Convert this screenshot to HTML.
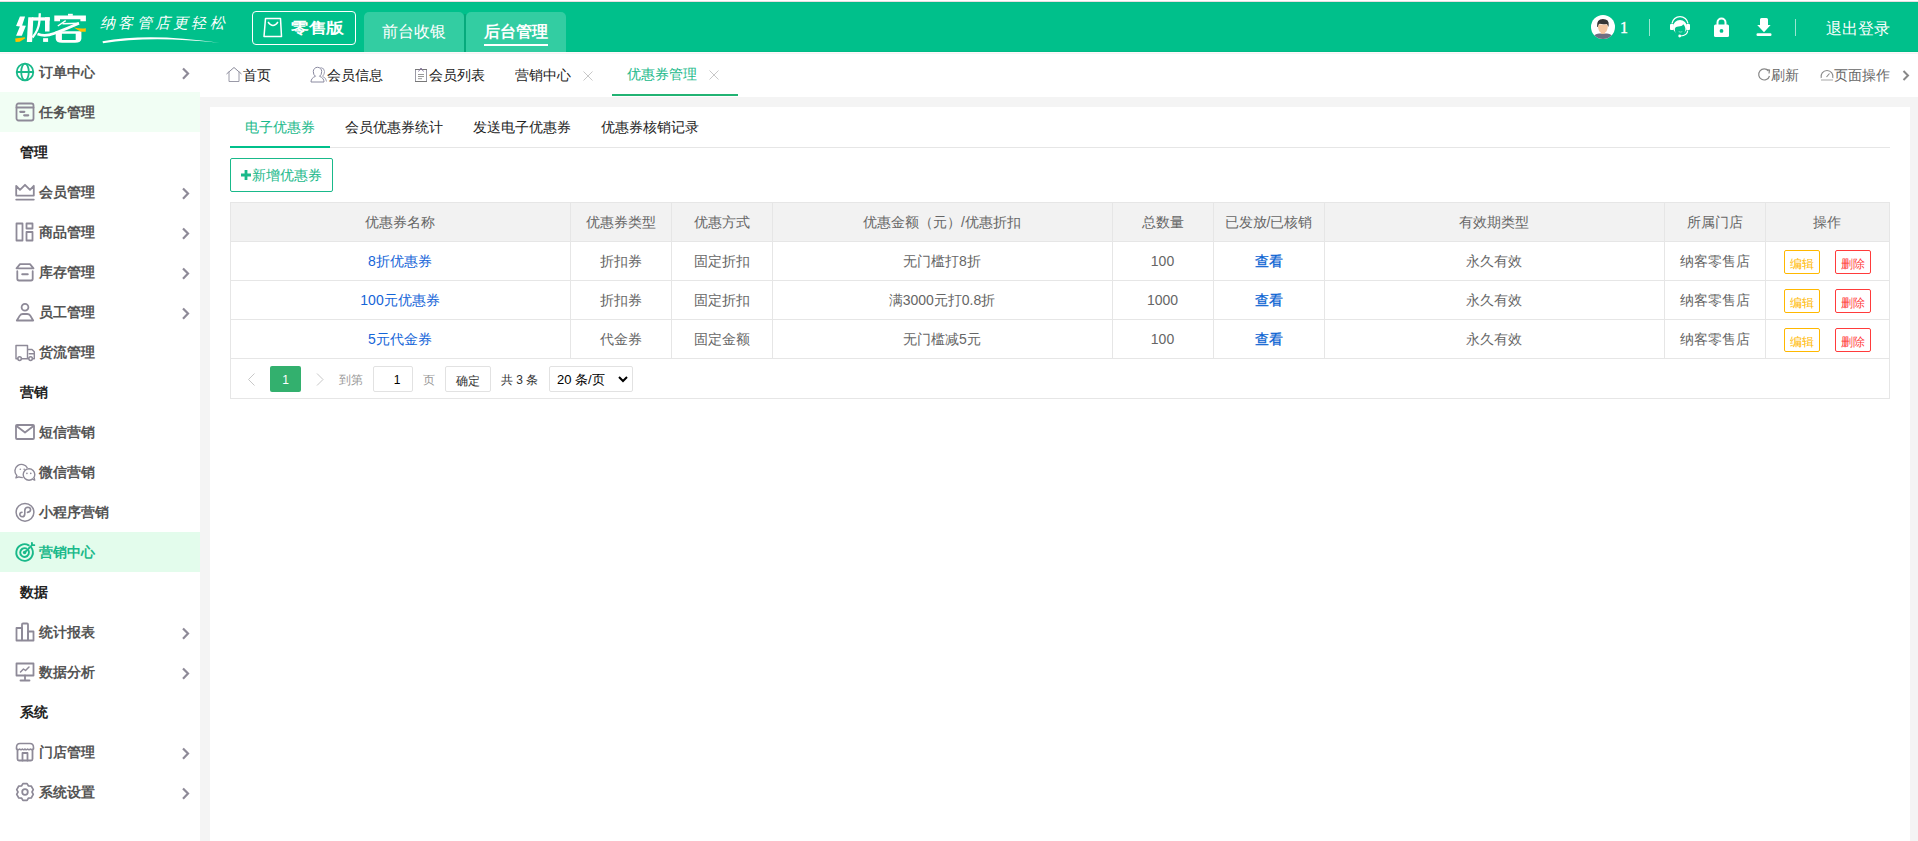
<!DOCTYPE html>
<html><head><meta charset="utf-8"><style>
*{box-sizing:border-box;margin:0;padding:0}
html,body{width:1918px;height:841px;overflow:hidden;background:#f4f4f4;font-family:"Liberation Sans",sans-serif;font-size:14px;color:#333}
#topline{position:absolute;left:0;top:1px;width:1918px;height:1px;background:#e6dde1}
body{background:#f4f4f4}
#hdr{position:absolute;left:0;top:2px;width:1918px;height:50px;background:#00c08b;border-top:1px solid #00bc87;border-bottom:1px solid #00bb86}
#side{position:absolute;left:0;top:52px;width:200px;height:789px;background:#fff}
#tabbar{position:absolute;left:200px;top:52px;width:1718px;height:45px;background:#fff}
#card{position:absolute;left:210px;top:107px;width:1700px;height:734px;background:#fff}
.t{position:absolute;white-space:nowrap}
svg{position:absolute;overflow:visible}
.si{position:absolute;left:0;width:200px;height:40px}
.si .lb{position:absolute;left:39px;top:0;line-height:40px;font-weight:bold;color:#555;font-size:14px;white-space:nowrap}
.sh{position:absolute;left:20px;height:40px;line-height:40px;font-weight:bold;color:#222;font-size:14px}
.cell{position:absolute;text-align:center;white-space:nowrap;font-size:14px}
.vl{position:absolute;width:1px;background:#e6e6e6}
.hl{position:absolute;height:1px;background:#e6e6e6}
</style></head><body>
<div style="position:absolute;left:0;top:0;width:1918px;height:1px;background:#fff"></div><div id="topline"></div><div id="hdr"></div><div id="side"></div><div id="tabbar"></div><div id="card"></div>
<svg style="left:0;top:0" width="100" height="52"><path d="M19.9 16.4 L25.1 16.4 L22.1 25.4 L25.9 25.8 L21.85 35.7 L16.07 35.7 L19.9 26.5 L16.07 26.1 Z" fill="#fff"/><path d="M15.2 38.5 L24.8 37.2 L25.3 38.3 L19.7 41.7 L15.6 41.9 Z" fill="#ffc000"/><path d="M28.3 17.3 L33.4 17.3 L32.1 41.9 L26.8 41.9 Z" fill="#fff"/><path d="M32 17.3 H49.7 V20.6 H32 Z" fill="#fff"/><path d="M45 17.3 H49.7 L49.5 31.4 H45 Z" fill="#fff"/><path d="M39.8 13.2 L39.3 22 Q38.6 30 32.5 37.5" stroke="#fff" stroke-width="2.3" fill="none"/><rect x="43.1" y="38.2" width="5" height="3.7" fill="#fff"/><rect x="68" y="13.8" width="4.8" height="2" fill="#fff"/><path d="M54.3 15.4 H85.9 V21.3 H80.4 V19.2 H60 V21.3 H54.3 Z" fill="#fff"/><path d="M57.8 26 L65.7 20.6" stroke="#fff" stroke-width="1.4" fill="none"/><path d="M62.5 23.8 L79 23.3" stroke="#fff" stroke-width="1.4" fill="none"/><path d="M79 23.2 Q66 29 54 33.5 Q45 37 37.5 34" stroke="#fff" stroke-width="2.8" fill="none"/><path fill-rule="evenodd" d="M55.7 31.3 H81.4 V38.5 Q81.4 42.7 75 42.7 H62 Q55.7 42.7 55.7 38.5 Z M61.9 33.7 V39.9 H75.7 V33.7 Z" fill="#fff"/><path d="M73.8 27.5 Q80 28.8 85.9 28.2 L85.7 31.8 L80.9 31.8 Q77 29.5 73.8 27.5 Z" fill="#ffc000"/></svg>
<div class="t" style="left:100px;top:11px;font-size:15px;line-height:24px;color:#fff;letter-spacing:3.3px;font-family:'Liberation Serif',serif;font-style:italic;font-weight:300">纳客管店更轻松</div>
<svg style="left:0;top:0" width="240" height="52"><path d="M102.5 41.2 Q150 32.5 219.5 42.8 Q150 35.5 103 43.3 Z" fill="#fff"/></svg>
<div style="position:absolute;left:252px;top:11px;width:104px;height:34px;border:1.3px solid #fff;border-radius:4px"></div>
<svg style="left:263px;top:17px" width="20" height="21"><path d="M2.5 1.5 H17.5 L18.5 19.5 H1 Z" stroke="#fff" stroke-width="1.5" fill="none" stroke-linejoin="round"/><path d="M5 5 Q10 12 15 5" stroke="#fff" stroke-width="1.3" fill="none"/></svg>
<div class="t" style="left:291px;top:16px;font-size:18px;line-height:24px;font-weight:bold;color:#fff;transform:scale(.98,.82);transform-origin:0 50%">零售版</div>
<div style="position:absolute;left:364px;top:12px;width:100px;height:40px;background:#33cda2;border-radius:5px 5px 0 0"></div>
<div style="position:absolute;left:466px;top:12px;width:100px;height:40px;background:#33cda2;border-radius:5px 5px 0 0"></div>
<div style="position:absolute;left:464px;top:14px;width:2px;height:38px;background:#06aa7c"></div>
<div class="t" style="left:382px;top:20px;font-size:16px;line-height:24px;color:#fff">前台收银</div>
<div class="t" style="left:484px;top:20px;font-size:16px;line-height:24px;color:#fff;font-weight:bold">后台管理</div>
<div style="position:absolute;left:484px;top:44px;width:64px;height:2px;background:#fff"></div>
<svg style="left:1591px;top:15px" width="24" height="24"><defs><clipPath id="cc"><circle cx="12" cy="12" r="12"/></clipPath></defs><circle cx="12" cy="12" r="12" fill="#fff"/><g clip-path="url(#cc)"><path d="M1.5 25 Q2 19.2 8 18.6 H16 Q22 19.2 22.5 25 Z" fill="#6e6e82"/><rect x="10" y="15.5" width="3.8" height="3.4" fill="#eebb94"/><path d="M6.9 9.5 Q6.8 15.5 9.3 17.3 Q11.9 19.3 14.5 17.3 Q17 15.5 16.9 9.5 Z" fill="#f5c6a0"/><path d="M6 11.8 Q5.4 4.1 11.9 4 Q18.3 4.1 17.7 10.2 L17.2 12 Q16.9 9.3 15.6 9 Q12 9.6 8.6 8.8 Q7.1 9.3 6.8 12 Z" fill="#363636"/></g></svg>
<div class="t" style="left:1620px;top:18px;font-size:16px;line-height:20px;color:#fff;font-family:'Liberation Serif',serif;-webkit-text-stroke:.3px #fff">1</div>
<div style="position:absolute;left:1649px;top:19px;width:1px;height:17px;background:rgba(255,255,255,.6)"></div>
<div style="position:absolute;left:1795px;top:19px;width:1px;height:17px;background:rgba(255,255,255,.6)"></div>
<svg style="left:1666px;top:12px" width="28" height="28"><path d="M6 11.5 A8.1 8.1 0 0 1 22 11.5" stroke="#fff" stroke-width="1.3" fill="none"/><circle cx="14" cy="15" r="7" fill="#fff"/><path d="M8.8 16.7 Q9.5 15 11 14.8 Q14.5 14.3 16 13.7 L17.3 12.2 Q18.3 13.3 18.6 14 Q19.3 15.5 19.4 16.7 Q19.6 19 18.2 21 Q16.5 23.5 14 23.5 Q11.5 23.5 10 21.5 Q8.6 19.5 8.8 16.7 Z" fill="#00c08b"/><rect x="4" y="12" width="3.8" height="6" rx="1" fill="#fff"/><rect x="20.2" y="12" width="3.8" height="6" rx="1" fill="#fff"/><path d="M21.7 18.5 Q21.5 23.5 14.3 24" stroke="#fff" stroke-width="1.2" fill="none"/><circle cx="13.7" cy="24" r="1.4" fill="#fff"/><path d="M12.7 19.7 Q14.5 20.5 16.3 19.7" stroke="#fff" stroke-width=".8" fill="none" opacity=".6"/></svg>
<svg style="left:1714px;top:17px" width="16" height="21"><path d="M3.5 8 V5.5 A4 4 0 0 1 11.5 5.5 V8" stroke="#fff" stroke-width="2" fill="none"/><rect x="0" y="7.5" width="15" height="12.5" rx="1.5" fill="#fff"/><circle cx="7.5" cy="13.9" r="1.9" fill="#00c08b"/></svg>
<svg style="left:1756px;top:17px" width="16" height="20"><path d="M4 8 V2.5 Q4 1 5.5 1 H10.5 Q12 1 12 2.5 V8 H14.6 L8 15.2 L1.2 8 Z" fill="#fff"/><rect x="0.5" y="16.2" width="15" height="2.8" rx="1.2" fill="#fff"/></svg>
<div class="t" style="left:1826px;top:17px;font-size:16px;line-height:24px;color:#fff">退出登录</div>
<div style="position:absolute;left:0;top:52px;width:1918px;height:1px;background:#fdf8fa"></div><div style="position:absolute;left:0;top:53px;width:1918px;height:1px;background:#f5f5f5"></div>
<svg style="left:226px;top:67px" width="17" height="16"><path d="M0.5 7 L8 0.5 L15.5 7" stroke="#8a8a9a" stroke-width="1" fill="none"/><path d="M3 4.5 V14.5 H13 V4.5" stroke="#9a9aa8" stroke-width="1" fill="none"/></svg>
<div class="t" style="left:243px;top:65px;font-size:14px;line-height:20px;color:#1a1a1a">首页</div>
<svg style="left:310px;top:66px" width="18" height="17"><path d="M1 16 Q1 12 5.5 10.3 Q3.3 9 3.3 5.5 A4.2 4.2 0 0 1 11.7 5.5 Q11.7 9 9.5 10.3 Q14 12 14 16 Z" stroke="#8a8aa0" stroke-width="1" fill="none"/><path d="M10.5 1.5 Q14.5 2 14.5 5.5 Q14.5 8.5 12.5 10.3 Q16.5 12 16.5 15.5" stroke="#a0a0b4" stroke-width="1" fill="none"/></svg>
<div class="t" style="left:327px;top:65px;font-size:14px;line-height:20px;color:#1a1a1a">会员信息</div>
<svg style="left:414px;top:67px" width="14" height="16"><path d="M1.5 2.5 H12.5 V14.5 H1.5 Z" stroke="#9a9aa6" stroke-width="1" fill="none"/><path d="M1 2.5 H13 M1 14.5 H13" stroke="#777" stroke-width="1"/><path d="M4.5 4.5 L7 1 L9.5 4.5" stroke="#8a7aa0" stroke-width="1" fill="none"/><path d="M4 7.5 H10 M4 9.5 H10 M4 11.7 H8" stroke="#999" stroke-width="1"/></svg>
<div class="t" style="left:429px;top:65px;font-size:14px;line-height:20px;color:#1a1a1a">会员列表</div>
<div class="t" style="left:515px;top:65px;font-size:14px;line-height:20px;color:#1a1a1a">营销中心</div>
<svg style="left:583px;top:71px" width="10" height="10"><path d="M0.5 0.5 L9.5 9.5 M9.5 0.5 L0.5 9.5" stroke="#c8c8c8" stroke-width="1"/></svg>
<div class="t" style="left:627px;top:64px;font-size:14px;line-height:20px;color:#19b98a">优惠券管理</div>
<svg style="left:709px;top:70px" width="10" height="10"><path d="M0.5 0.5 L9.5 9.5 M9.5 0.5 L0.5 9.5" stroke="#c8c8c8" stroke-width="1"/></svg>
<div style="position:absolute;left:612px;top:94px;width:126px;height:2px;background:#22b373"></div>
<svg style="left:1757px;top:68px" width="14" height="14"><path d="M11.5 3 A5.5 5.5 0 1 0 12.5 8" stroke="#888" stroke-width="1.2" fill="none"/><path d="M9 1.5 L12.5 2 L12 5.5" stroke="#888" stroke-width="1.2" fill="none"/></svg>
<div class="t" style="left:1771px;top:65px;font-size:14px;line-height:20px;color:#666">刷新</div>
<svg style="left:1820px;top:68px" width="14" height="14"><path d="M1.2 10 A6 6 0 1 1 12.8 10" stroke="#888" stroke-width="1.1" fill="none"/><path d="M1 12 H13" stroke="#c8c8c8" stroke-width="1.6"/><path d="M6.5 9 L9.5 5.5" stroke="#888" stroke-width="1.1"/></svg>
<div class="t" style="left:1834px;top:65px;font-size:14px;line-height:20px;color:#666">页面操作</div>
<svg style="left:1902px;top:70px" width="8" height="11"><path d="M1.5 1 L6 5.5 L1.5 10" stroke="#888" stroke-width="2" fill="none"/></svg>
<div class="si" style="top:52px;">
<svg style="left:15px;top:10px" width="20" height="20"><g stroke-width="1.8"><circle cx="10" cy="10" r="8.3" stroke="#19b98a" fill="none" stroke-linejoin="round" stroke-linecap="round"/><ellipse cx="10" cy="10" rx="3.8" ry="8.3" stroke="#19b98a" fill="none" stroke-linejoin="round" stroke-linecap="round"/><path d="M2 10 H18" stroke="#19b98a" fill="none" stroke-linejoin="round" stroke-linecap="round"/></g></svg>
<div class="lb" style="color:#555">订单中心</div>
<svg style="left:181px;top:15px" width="10" height="13"><path d="M2 1.5 L7 6.6 L2 11.7" stroke="#8e8a98" stroke-width="2.2" fill="none"/></svg>
</div>
<div class="si" style="top:92px;background:#f1fef4;">
<svg style="left:15px;top:10px" width="20" height="20"><g stroke-width="1.8"><rect x="1.5" y="1.5" width="17" height="17" rx="2" stroke="#8e8a98" fill="none" stroke-linejoin="round" stroke-linecap="round"/><path d="M1.5 5.5 H18.5" stroke="#8e8a98" fill="none" stroke-linejoin="round" stroke-linecap="round"/><path d="M5.3 9.8 H9.3 M9.2 13.3 H13.2" stroke="#8e8a98" fill="none" stroke-linejoin="round" stroke-linecap="round" stroke-width="2.2"/></g></svg>
<div class="lb" style="color:#555">任务管理</div>
</div>
<div class="sh" style="top:132px">管理</div>
<div class="si" style="top:172px;">
<svg style="left:15px;top:10px" width="20" height="20"><g stroke-width="1.8"><path d="M1.2 13.6 V3.8 L5 7.9 L10 2.8 L15 7.9 L18.8 3.8 V13.6 Z" stroke="#8e8a98" fill="none" stroke-linejoin="round" stroke-linecap="round" stroke-linejoin="miter"/><path d="M1.2 17.6 H18.8" stroke="#8e8a98" fill="none" stroke-linejoin="round" stroke-linecap="round"/></g></svg>
<div class="lb" style="color:#555">会员管理</div>
<svg style="left:181px;top:15px" width="10" height="13"><path d="M2 1.5 L7 6.6 L2 11.7" stroke="#8e8a98" stroke-width="2.2" fill="none"/></svg>
</div>
<div class="si" style="top:212px;">
<svg style="left:15px;top:10px" width="20" height="20"><g stroke-width="1.8"><rect x="1.5" y="1.5" width="6" height="17" stroke="#8e8a98" fill="none" stroke-linejoin="round" stroke-linecap="round"/><rect x="11.5" y="1.5" width="6" height="5" stroke="#8e8a98" fill="none" stroke-linejoin="round" stroke-linecap="round"/><rect x="11.5" y="10" width="6" height="8.5" stroke="#8e8a98" fill="none" stroke-linejoin="round" stroke-linecap="round"/></g></svg>
<div class="lb" style="color:#555">商品管理</div>
<svg style="left:181px;top:15px" width="10" height="13"><path d="M2 1.5 L7 6.6 L2 11.7" stroke="#8e8a98" stroke-width="2.2" fill="none"/></svg>
</div>
<div class="si" style="top:252px;">
<svg style="left:15px;top:10px" width="20" height="20"><g stroke-width="1.8"><path d="M1.5 6.3 L5 2.2 H15 L18.5 6.3 Z" stroke="#8e8a98" fill="none" stroke-linejoin="round" stroke-linecap="round"/><path d="M2.3 9.2 V16.8 Q2.3 18.5 4 18.5 H16 Q17.7 18.5 17.7 16.8 V9.2" stroke="#8e8a98" fill="none" stroke-linejoin="round" stroke-linecap="round"/><path d="M7.3 12.3 H12.7" stroke="#8e8a98" fill="none" stroke-linejoin="round" stroke-linecap="round" stroke-width="2.1"/></g></svg>
<div class="lb" style="color:#555">库存管理</div>
<svg style="left:181px;top:15px" width="10" height="13"><path d="M2 1.5 L7 6.6 L2 11.7" stroke="#8e8a98" stroke-width="2.2" fill="none"/></svg>
</div>
<div class="si" style="top:292px;">
<svg style="left:15px;top:10px" width="20" height="20"><g stroke-width="1.8"><circle cx="10" cy="5.2" r="3.4" stroke="#8e8a98" fill="none" stroke-linejoin="round" stroke-linecap="round"/><path d="M1.8 18.5 L4.8 13.6 Q5.8 12 7.8 12 H12.2 Q14.2 12 15.2 13.6 L18.2 18.5 Z" stroke="#8e8a98" fill="none" stroke-linejoin="round" stroke-linecap="round"/></g></svg>
<div class="lb" style="color:#555">员工管理</div>
<svg style="left:181px;top:15px" width="10" height="13"><path d="M2 1.5 L7 6.6 L2 11.7" stroke="#8e8a98" stroke-width="2.2" fill="none"/></svg>
</div>
<div class="si" style="top:332px;">
<svg style="left:15px;top:10px" width="20" height="20"><g stroke-width="1.8"><path d="M2.8 16.7 H1 V3.5 H12.5 V16.7 M12.5 7.5 H17 L19.3 9.8 V16.7 H17.5 M6.5 16.7 H13.5 M14.3 11.7 H18.4" stroke="#8e8a98" fill="none" stroke-linejoin="round" stroke-linecap="round" stroke-width="1.45"/><circle cx="4.6" cy="16.6" r="1.8" stroke="#8e8a98" fill="none" stroke-linejoin="round" stroke-linecap="round" stroke-width="1.5"/><circle cx="15.6" cy="16.6" r="1.8" stroke="#8e8a98" fill="none" stroke-linejoin="round" stroke-linecap="round" stroke-width="1.5"/></g></svg>
<div class="lb" style="color:#555">货流管理</div>
</div>
<div class="sh" style="top:372px">营销</div>
<div class="si" style="top:412px;">
<svg style="left:15px;top:10px" width="20" height="20"><g stroke-width="1.8"><rect x="1" y="3" width="18" height="14" rx="1" stroke="#8e8a98" fill="none" stroke-linejoin="round" stroke-linecap="round"/><path d="M1.5 4 L10 10.5 L18.5 4" stroke="#8e8a98" fill="none" stroke-linejoin="round" stroke-linecap="round"/></g></svg>
<div class="lb" style="color:#555">短信营销</div>
</div>
<div class="si" style="top:452px;">
<svg style="left:15px;top:10px" width="20" height="20"><g stroke-width="1.8"><g transform="translate(-1,-1)"><path d="M13.4 7 A6.6 6.6 0 1 0 2.8 14.6 L1.9 16.9 L4.9 15.9 Q6.4 16.6 8.8 16.6" stroke="#8e8a98" stroke-width="1.4" fill="none" stroke-linejoin="round"/><circle cx="15" cy="13.5" r="5.8" stroke="#8e8a98" stroke-width="1.4" fill="#fff"/><path d="M18.4 18.1 L20.7 19.1 L20.1 16.6" stroke="#8e8a98" stroke-width="1.4" fill="#fff" stroke-linejoin="round"/><circle cx="6.3" cy="8.2" r=".8" fill="#8e8a98"/><circle cx="10.2" cy="8.2" r=".8" fill="#8e8a98"/><circle cx="12.9" cy="12.4" r=".8" fill="#8e8a98"/><circle cx="16.75" cy="12.4" r=".8" fill="#8e8a98"/></g></g></svg>
<div class="lb" style="color:#555">微信营销</div>
</div>
<div class="si" style="top:492px;">
<svg style="left:15px;top:10px" width="20" height="20"><g stroke-width="1.8"><circle cx="10" cy="10.3" r="8.9" stroke="#8e8a98" fill="none" stroke-linejoin="round" stroke-linecap="round" stroke-width="1.5"/><path d="M12.5 10.4 Q15.6 10 15.6 7.6 Q15.4 5.3 12.9 5.3 Q9.9 5.5 9.8 8.5 V11.6 Q9.7 14.7 7.3 14.7 Q4.9 14.6 4.8 12.3 Q4.9 10.4 7 10.2" stroke="#8e8a98" fill="none" stroke-linejoin="round" stroke-linecap="round" stroke-width="1.6"/></g></svg>
<div class="lb" style="color:#555">小程序营销</div>
</div>
<div class="si" style="top:532px;background:#e3fcec;">
<svg style="left:15px;top:10px" width="20" height="20"><g stroke-width="1.8"><path d="M16.40 5.74 A8.3 8.3 0 1 1 13.75 3.31" stroke="#19b98a" fill="none" stroke-linejoin="round" stroke-linecap="round" stroke-width="1.9"/><path d="M13.41 8.30 A4.4 4.4 0 1 1 11.10 6.37" stroke="#19b98a" fill="none" stroke-linejoin="round" stroke-linecap="round" stroke-width="1.9"/><circle cx="9.6" cy="10.5" r="1.7" fill="#19b98a"/><path d="M9.6 10.5 L17.3 2.8" stroke="#19b98a" fill="none" stroke-linejoin="round" stroke-linecap="round" stroke-width="1.8"/><path d="M16.9 0.9 L17 3 L19.3 3.1" stroke="#19b98a" fill="none" stroke-linejoin="round" stroke-linecap="round" stroke-width="1.9"/></g></svg>
<div class="lb" style="color:#19b98a">营销中心</div>
</div>
<div class="sh" style="top:572px">数据</div>
<div class="si" style="top:612px;">
<svg style="left:15px;top:10px" width="20" height="20"><g stroke-width="1.8"><rect x="1.5" y="6" width="5.5" height="12.5" stroke="#8e8a98" fill="none" stroke-linejoin="round" stroke-linecap="round"/><rect x="7" y="1.5" width="6" height="17" rx="1" stroke="#8e8a98" fill="none" stroke-linejoin="round" stroke-linecap="round"/><rect x="13" y="9.5" width="5.5" height="9" stroke="#8e8a98" fill="none" stroke-linejoin="round" stroke-linecap="round"/></g></svg>
<div class="lb" style="color:#555">统计报表</div>
<svg style="left:181px;top:15px" width="10" height="13"><path d="M2 1.5 L7 6.6 L2 11.7" stroke="#8e8a98" stroke-width="2.2" fill="none"/></svg>
</div>
<div class="si" style="top:652px;">
<svg style="left:15px;top:10px" width="20" height="20"><g stroke-width="1.8"><rect x="1.5" y="1.5" width="17" height="12" stroke="#8e8a98" fill="none" stroke-linejoin="round" stroke-linecap="round"/><path d="M5.5 10 L8.5 7 L10.5 8.5 L14 5" stroke="#8e8a98" fill="none" stroke-linejoin="round" stroke-linecap="round" stroke-width="1.5"/><path d="M10 13.5 V17 M5.5 18.5 H14.5" stroke="#8e8a98" fill="none" stroke-linejoin="round" stroke-linecap="round"/></g></svg>
<div class="lb" style="color:#555">数据分析</div>
<svg style="left:181px;top:15px" width="10" height="13"><path d="M2 1.5 L7 6.6 L2 11.7" stroke="#8e8a98" stroke-width="2.2" fill="none"/></svg>
</div>
<div class="sh" style="top:692px">系统</div>
<div class="si" style="top:732px;">
<svg style="left:15px;top:10px" width="20" height="20"><g stroke-width="1.8"><path d="M1.5 5.5 Q1.5 1.5 5 1.5 H15 Q18.5 1.5 18.5 5.5 V7 Q17 8.5 15.5 7 Q14 8.5 12.5 7 Q11 8.5 10 7 Q9 8.5 7.5 7 Q6 8.5 4.5 7 Q3 8.5 1.5 7 Z" stroke="#8e8a98" fill="none" stroke-linejoin="round" stroke-linecap="round" stroke-width="1.6"/><path d="M2.5 7.5 V17 Q2.5 18.5 4 18.5 H16 Q17.5 18.5 17.5 17 V7.5" stroke="#8e8a98" fill="none" stroke-linejoin="round" stroke-linecap="round"/><path d="M7.5 18.5 V11 H12.5 V18.5" stroke="#8e8a98" fill="none" stroke-linejoin="round" stroke-linecap="round"/></g></svg>
<div class="lb" style="color:#555">门店管理</div>
<svg style="left:181px;top:15px" width="10" height="13"><path d="M2 1.5 L7 6.6 L2 11.7" stroke="#8e8a98" stroke-width="2.2" fill="none"/></svg>
</div>
<div class="si" style="top:772px;">
<svg style="left:15px;top:10px" width="20" height="20"><g stroke-width="1.8"><path d="M6.50 3.94 L7.92 1.66 L12.08 1.66 L13.50 3.94 L16.19 4.03 L18.27 7.63 L17.00 10.00 L18.27 12.37 L16.19 15.97 L13.50 16.06 L12.08 18.34 L7.92 18.34 L6.50 16.06 L3.81 15.97 L1.73 12.37 L3.00 10.00 L1.73 7.63 L3.81 4.03 Z" stroke="#8e8a98" fill="none" stroke-linejoin="round" stroke-linecap="round" stroke-width="1.7"/><circle cx="10" cy="10" r="2.8" stroke="#8e8a98" fill="none" stroke-linejoin="round" stroke-linecap="round"/></g></svg>
<div class="lb" style="color:#555">系统设置</div>
<svg style="left:181px;top:15px" width="10" height="13"><path d="M2 1.5 L7 6.6 L2 11.7" stroke="#8e8a98" stroke-width="2.2" fill="none"/></svg>
</div>
<div class="hl" style="left:230px;top:147px;width:1660px;background:#e6e6e6"></div>
<div style="position:absolute;left:230px;top:146px;width:100px;height:2px;background:#00c08b"></div>
<div class="t" style="left:245px;top:117px;font-size:14px;line-height:20px;color:#19b98a">电子优惠券</div>
<div class="t" style="left:345px;top:117px;font-size:14px;line-height:20px;color:#222">会员优惠券统计</div>
<div class="t" style="left:473px;top:117px;font-size:14px;line-height:20px;color:#222">发送电子优惠券</div>
<div class="t" style="left:601px;top:117px;font-size:14px;line-height:20px;color:#222">优惠券核销记录</div>
<div style="position:absolute;left:230px;top:158px;width:103px;height:34px;border:1px solid #19b98a;border-radius:2px"></div>
<svg style="left:241px;top:170px" width="10" height="10"><path d="M0 5 H10 M5 0 V10" stroke="#19b98a" stroke-width="2.8"/></svg>
<div class="t" style="left:252px;top:165px;font-size:14px;line-height:20px;color:#19b98a">新增优惠券</div>
<div style="position:absolute;left:230px;top:202px;width:1660px;height:39px;background:#f2f2f2"></div>
<div class="hl" style="left:230px;top:202px;width:1660px"></div>
<div class="hl" style="left:230px;top:241px;width:1660px"></div>
<div class="hl" style="left:230px;top:280px;width:1660px"></div>
<div class="hl" style="left:230px;top:319px;width:1660px"></div>
<div class="hl" style="left:230px;top:358px;width:1660px"></div>
<div class="hl" style="left:230px;top:398px;width:1660px"></div>
<div class="vl" style="left:230px;top:202px;height:197px"></div>
<div class="vl" style="left:570px;top:202px;height:156px"></div>
<div class="vl" style="left:671px;top:202px;height:156px"></div>
<div class="vl" style="left:772px;top:202px;height:156px"></div>
<div class="vl" style="left:1112px;top:202px;height:156px"></div>
<div class="vl" style="left:1213px;top:202px;height:156px"></div>
<div class="vl" style="left:1324px;top:202px;height:156px"></div>
<div class="vl" style="left:1664px;top:202px;height:156px"></div>
<div class="vl" style="left:1765px;top:202px;height:156px"></div>
<div class="vl" style="left:1889px;top:202px;height:197px"></div>
<div class="cell" style="left:230px;top:203px;width:340px;line-height:39px;color:#666">优惠券名称</div>
<div class="cell" style="left:570px;top:203px;width:101px;line-height:39px;color:#666">优惠券类型</div>
<div class="cell" style="left:671px;top:203px;width:101px;line-height:39px;color:#666">优惠方式</div>
<div class="cell" style="left:772px;top:203px;width:340px;line-height:39px;color:#666">优惠金额（元）/优惠折扣</div>
<div class="cell" style="left:1112px;top:203px;width:101px;line-height:39px;color:#666">总数量</div>
<div class="cell" style="left:1213px;top:203px;width:111px;line-height:39px;color:#666">已发放/已核销</div>
<div class="cell" style="left:1324px;top:203px;width:340px;line-height:39px;color:#666">有效期类型</div>
<div class="cell" style="left:1664px;top:203px;width:101px;line-height:39px;color:#666">所属门店</div>
<div class="cell" style="left:1765px;top:203px;width:124px;line-height:39px;color:#666">操作</div>
<div class="cell" style="left:230px;top:242px;width:340px;line-height:39px;color:#1565d8;">8折优惠券</div>
<div class="cell" style="left:570px;top:242px;width:101px;line-height:39px;color:#666;">折扣券</div>
<div class="cell" style="left:671px;top:242px;width:101px;line-height:39px;color:#666;">固定折扣</div>
<div class="cell" style="left:772px;top:242px;width:340px;line-height:39px;color:#666;">无门槛打8折</div>
<div class="cell" style="left:1112px;top:242px;width:101px;line-height:39px;color:#666;">100</div>
<div class="cell" style="left:1213px;top:242px;width:111px;line-height:39px;color:#0862d2;-webkit-text-stroke:.3px #0862d2">查看</div>
<div class="cell" style="left:1324px;top:242px;width:340px;line-height:39px;color:#666;">永久有效</div>
<div class="cell" style="left:1664px;top:242px;width:101px;line-height:39px;color:#666;">纳客零售店</div>
<div style="position:absolute;left:1784px;top:250px;width:36px;height:24px;border:1px solid #ffb800;border-radius:2px;color:#ffb800;font-size:12px;line-height:22px;text-align:center;padding-top:2px">编辑</div>
<div style="position:absolute;left:1835px;top:250px;width:36px;height:24px;border:1px solid #ff3b3b;border-radius:2px;color:#ff3b3b;font-size:12px;line-height:22px;text-align:center;padding-top:2px">删除</div>
<div class="cell" style="left:230px;top:281px;width:340px;line-height:39px;color:#1565d8;">100元优惠券</div>
<div class="cell" style="left:570px;top:281px;width:101px;line-height:39px;color:#666;">折扣券</div>
<div class="cell" style="left:671px;top:281px;width:101px;line-height:39px;color:#666;">固定折扣</div>
<div class="cell" style="left:772px;top:281px;width:340px;line-height:39px;color:#666;">满3000元打0.8折</div>
<div class="cell" style="left:1112px;top:281px;width:101px;line-height:39px;color:#666;">1000</div>
<div class="cell" style="left:1213px;top:281px;width:111px;line-height:39px;color:#0862d2;-webkit-text-stroke:.3px #0862d2">查看</div>
<div class="cell" style="left:1324px;top:281px;width:340px;line-height:39px;color:#666;">永久有效</div>
<div class="cell" style="left:1664px;top:281px;width:101px;line-height:39px;color:#666;">纳客零售店</div>
<div style="position:absolute;left:1784px;top:289px;width:36px;height:24px;border:1px solid #ffb800;border-radius:2px;color:#ffb800;font-size:12px;line-height:22px;text-align:center;padding-top:2px">编辑</div>
<div style="position:absolute;left:1835px;top:289px;width:36px;height:24px;border:1px solid #ff3b3b;border-radius:2px;color:#ff3b3b;font-size:12px;line-height:22px;text-align:center;padding-top:2px">删除</div>
<div class="cell" style="left:230px;top:320px;width:340px;line-height:39px;color:#1565d8;">5元代金券</div>
<div class="cell" style="left:570px;top:320px;width:101px;line-height:39px;color:#666;">代金券</div>
<div class="cell" style="left:671px;top:320px;width:101px;line-height:39px;color:#666;">固定金额</div>
<div class="cell" style="left:772px;top:320px;width:340px;line-height:39px;color:#666;">无门槛减5元</div>
<div class="cell" style="left:1112px;top:320px;width:101px;line-height:39px;color:#666;">100</div>
<div class="cell" style="left:1213px;top:320px;width:111px;line-height:39px;color:#0862d2;-webkit-text-stroke:.3px #0862d2">查看</div>
<div class="cell" style="left:1324px;top:320px;width:340px;line-height:39px;color:#666;">永久有效</div>
<div class="cell" style="left:1664px;top:320px;width:101px;line-height:39px;color:#666;">纳客零售店</div>
<div style="position:absolute;left:1784px;top:328px;width:36px;height:24px;border:1px solid #ffb800;border-radius:2px;color:#ffb800;font-size:12px;line-height:22px;text-align:center;padding-top:2px">编辑</div>
<div style="position:absolute;left:1835px;top:328px;width:36px;height:24px;border:1px solid #ff3b3b;border-radius:2px;color:#ff3b3b;font-size:12px;line-height:22px;text-align:center;padding-top:2px">删除</div>
<svg style="left:247px;top:373px" width="9" height="13"><path d="M7.5 0.5 L1.5 6.5 L7.5 12.5" stroke="#c8c8c8" stroke-width="1" fill="none"/></svg>
<div style="position:absolute;left:270px;top:366px;width:31px;height:26px;background:#33b06e;border-radius:2px;color:#fff;font-size:12px;line-height:26px;text-align:center;padding-top:1px">1</div>
<svg style="left:316px;top:373px" width="9" height="13"><path d="M1 0.5 L7 6.5 L1 12.5" stroke="#c8c8c8" stroke-width="1" fill="none"/></svg>
<div class="t" style="left:339px;top:371px;font-size:12px;line-height:18px;color:#999">到第</div>
<div style="position:absolute;left:373px;top:366px;width:40px;height:26px;border:1px solid #e2e2e2;border-radius:2px;color:#000;font-size:12px;line-height:24px;text-align:center;padding-left:8px;padding-top:1px">1</div>
<div class="t" style="left:423px;top:371px;font-size:12px;line-height:18px;color:#999">页</div>
<div style="position:absolute;left:445px;top:366px;width:46px;height:26px;border:1px solid #e2e2e2;border-radius:2px;color:#333;font-size:12px;line-height:26px;text-align:center;padding-top:1px">确定</div>
<div class="t" style="left:501px;top:371px;font-size:12px;line-height:18px;color:#333">共 3 条</div>
<div style="position:absolute;left:549px;top:366px;width:84px;height:26px;border:1px solid #e2e2e2;border-radius:2px;background:#fff"></div>
<div class="t" style="left:557px;top:370px;font-size:13px;line-height:20px;color:#000">20 条/页</div>
<svg style="left:618px;top:376px" width="10" height="7"><path d="M1 1 L5 5 L9 1" stroke="#000" stroke-width="2" fill="none"/></svg>
</body></html>
